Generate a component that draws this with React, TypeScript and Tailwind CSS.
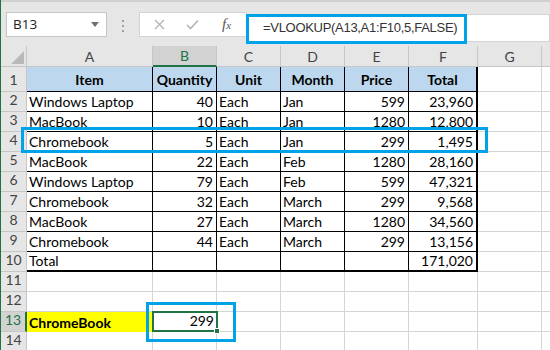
import React from "react";

const rows: string[][] = [
  ["Windows Laptop", "40", "Each", "Jan", "599", "23,960"],
  ["MacBook", "10", "Each", "Jan", "1280", "12,800"],
  ["Chromebook", "5", "Each", "Jan", "299", "1,495"],
  ["MacBook", "22", "Each", "Feb", "1280", "28,160"],
  ["Windows Laptop", "79", "Each", "Feb", "599", "47,321"],
  ["Chromebook", "32", "Each", "March", "299", "9,568"],
  ["MacBook", "27", "Each", "March", "1280", "34,560"],
  ["Chromebook", "44", "Each", "March", "299", "13,156"],
  ["Total", "", "", "", "", "171,020"],
];

const W = ["w-[126px]", "w-[64px]", "w-[64px]", "w-[64px]", "w-[64px]", "w-[69px]", "w-[64px]"];
const LETTERS = ["A", "B", "C", "D", "E", "F", "G"];
const headers = ["Item", "Quantity", "Unit", "Month", "Price", "Total"];

function RowHeader({ n, h, selected }: { n: number; h: string; selected?: boolean }) {
  return (
    <div
      className={
        selected
          ? `${h} w-[26px] shrink-0 flex items-end justify-center pb-[1px] bg-[#d2d2d2] border-b border-[#c6c6c6] border-r-2 border-r-[#217346] text-[#217346] text-[14px]`
          : `${h} w-[26px] shrink-0 flex items-end justify-center pb-[1px] bg-[#e6e6e6] border-b border-r border-[#c6c6c6] text-[#444] text-[14px]`
      }
    >
      {n}
    </div>
  );
}

function tableCellClass(col: number, row: number) {
  const inTable = row >= 1 && row <= 10 && col <= 5;
  if (inTable) {
    const r = col === 5 ? "border-r-2" : "border-r";
    const b = row === 10 ? "border-b-2" : "border-b";
    return `${r} ${b} border-black`;
  }
  return "border-r border-b border-[#d4d4d4]";
}

export default function App() {
  const cell = "font-['Lato',sans-serif] text-[14px] text-black";
  return (
    <div className="relative w-[550px] h-[350px] overflow-hidden bg-white border-l border-[#217346] font-['Lato',sans-serif]">
      {/* Top bar */}
      <div className="h-[46px] bg-[#e6e6e6] border-t-2 border-[#d0d0d0] flex items-start">
        <div className="ml-[5px] mt-[10px] w-[101px] h-[25px] bg-white border border-[#c6c6c6] flex items-center justify-between pl-[6px] pr-[7px]">
          <span className="font-['Open_Sans',sans-serif] text-[13.5px] text-[#222]">B13</span>
          <svg width="8" height="5" viewBox="0 0 8 5">
            <path d="M0 0 H8 L4 5 Z" fill="#707070" />
          </svg>
        </div>
        <div className="w-[32px] mt-[18px] flex flex-col items-center gap-[3px]">
          <div className="w-[2px] h-[2px] bg-[#a0a0a0]" />
          <div className="w-[2px] h-[2px] bg-[#a0a0a0]" />
          <div className="w-[2px] h-[2px] bg-[#a0a0a0]" />
        </div>
        <div className="mt-[10px] w-[108px] h-[25px] bg-white border border-[#d4d4d4] flex items-center">
          <svg className="ml-[14px]" width="11" height="11" viewBox="0 0 11 11">
            <path d="M1 1 L10 10 M10 1 L1 10" stroke="#b4b4b4" strokeWidth="1.4" />
          </svg>
          <svg className="ml-[21px]" width="13" height="11" viewBox="0 0 13 11">
            <path d="M1 6 L4.5 9.5 L12 1.5" stroke="#b4b4b4" strokeWidth="1.6" fill="none" />
          </svg>
          <span className="ml-[23px] font-['Liberation_Serif',serif] italic text-[15px] text-[#555] leading-none">
            f<span className="text-[11px]">x</span>
          </span>
        </div>
        <div className="mt-[12px] flex-1 h-[28px] bg-white border border-[#d4d4d4] border-l-0 flex items-center pl-[16px]">
          <span className="font-['Liberation_Sans',sans-serif] text-[13px] tracking-[-0.3px] text-[#333]">
            =VLOOKUP(A13,A1:F10,5,FALSE)
          </span>
        </div>
      </div>

      {/* Column header row */}
      <div className="flex h-[21px]">
        <div className="w-[26px] shrink-0 bg-[#e6e6e6] border-r border-b border-[#c6c6c6] relative">
          <svg className="absolute right-[2px] bottom-[2px]" width="13" height="13" viewBox="0 0 13 13">
            <path d="M13 0 V13 H0 Z" fill="#b9b9b9" />
          </svg>
        </div>
        {LETTERS.map((l, i) =>
          i === 1 ? (
            <div
              key={l}
              className={`${W[i]} shrink-0 flex items-center justify-center bg-[#d2d2d2] border-r border-r-[#c6c6c6] border-b-2 border-b-[#217346] text-[#217346] text-[14px]`}
            >
              {l}
            </div>
          ) : (
            <div
              key={l}
              className={`${W[i]} shrink-0 flex items-center justify-center bg-[#e6e6e6] border-r border-b border-[#c6c6c6] text-[#444] text-[14px]`}
            >
              {l}
            </div>
          )
        )}
        <div className="flex-1 bg-[#e6e6e6] border-b border-[#c6c6c6]" />
      </div>

      {/* Row 1 headers */}
      <div className="flex h-[25px]">
        <RowHeader n={1} h="h-[25px]" />
        {headers.map((t, i) => (
          <div
            key={t}
            className={`${W[i]} shrink-0 flex items-end justify-center pb-[1px] bg-[#bdd7ee] font-bold ${cell} ${tableCellClass(i, 1)}`}
          >
            {t}
          </div>
        ))}
        <div className={`${W[6]} shrink-0 ${tableCellClass(6, 1)}`} />
        <div className="flex-1 border-b border-[#d4d4d4]" />
      </div>

      {/* Data rows 2..10 */}
      {rows.map((r, ri) => {
        const rowNum = ri + 2;
        return (
          <div key={rowNum} className="flex h-[20px]">
            <RowHeader n={rowNum} h="h-[20px]" />
            {r.map((v, ci) => {
              const isNum = ci === 1 || ci === 4 || ci === 5;
              return (
                <div
                  key={ci}
                  className={`${W[ci]} shrink-0 flex items-end ${isNum ? "justify-end pr-[3px]" : "justify-start pl-[2px]"} ${cell} leading-[18px] ${tableCellClass(ci, rowNum)}`}
                >
                  {v}
                </div>
              );
            })}
            <div className={`${W[6]} shrink-0 ${tableCellClass(6, rowNum)}`} />
            <div className="flex-1 border-b border-[#d4d4d4]" />
          </div>
        );
      })}

      {/* Rows 11..14 */}
      {[11, 12, 13, 14].map((n) => (
        <div key={n} className="flex h-[20px]">
          <RowHeader n={n} h="h-[20px]" selected={n === 13} />
          {LETTERS.map((l, ci) => {
            if (n === 13 && ci === 0) {
              return (
                <div
                  key={l}
                  className={`${W[ci]} shrink-0 flex items-end pl-[2px] bg-[#ffff00] font-bold ${cell} leading-[18px]`}
                >
                  ChromeBook
                </div>
              );
            }
            if (n === 13 && ci === 1) {
              return (
                <div key={l} className={`${W[ci]} shrink-0 relative border-r border-b border-[#d4d4d4]`}>
                  <div className={`absolute left-[-1px] top-[-1px] w-[66px] h-[21px] border-2 border-[#217346] flex items-end justify-end pr-[2px] ${cell} leading-[18px]`}>
                    299
                  </div>
                  <div className="absolute right-[-4px] bottom-[-3px] w-[6px] h-[6px] bg-[#217346] border border-white" />
                </div>
              );
            }
            return <div key={l} className={`${W[ci]} shrink-0 ${tableCellClass(ci, n)}`} />;
          })}
          <div className="flex-1 border-b border-[#d4d4d4]" />
        </div>
      ))}

      {/* Annotation rectangles */}
      <div className="absolute left-[245px] top-[14px] w-[221px] h-[30px] border-[3px] border-[#00a2e8]" />
      <div className="absolute left-[20px] top-[127px] w-[467px] h-[26px] border-[3px] border-[#00a2e8]" />
      <div className="absolute left-[145px] top-[302px] w-[90px] h-[40px] border-[3px] border-[#00a2e8]" />
    </div>
  );
}
